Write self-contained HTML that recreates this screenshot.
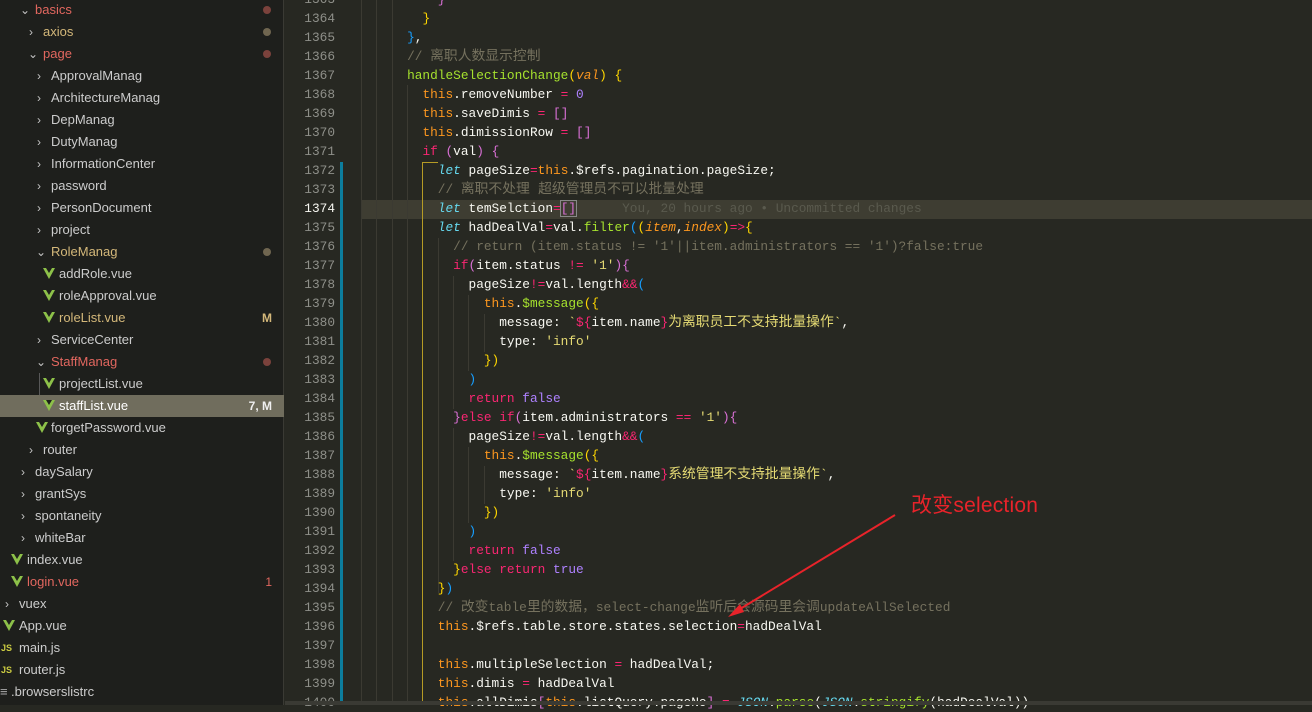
<!DOCTYPE html>
<html><head><meta charset="utf-8"><style>
*{margin:0;padding:0;box-sizing:border-box}
body{width:1312px;height:705px;overflow:hidden;background:#272822;position:relative;font-family:"Liberation Sans","Noto Sans CJK SC",sans-serif}
#side{position:absolute;left:0;top:0;width:284px;height:705px;background:#1e1f1c;border-right:1px solid #3a3a34}
.r{position:absolute;left:0;width:284px;height:22px;line-height:22px;font-size:13px;color:#cccccc;white-space:nowrap}
.r .tx{position:absolute}
.chev{position:absolute;top:0;font-size:12px;color:#c5c5c5}
.dot{position:absolute;left:263px;top:7px;width:8px;height:8px;border-radius:50%}
.badge{position:absolute;right:12px;top:0;font-weight:bold;font-size:12px}
.v{position:absolute;top:5px;width:0;height:0;border-left:6px solid transparent;border-right:6px solid transparent;border-top:11px solid #8dc149}
.v:after{content:"";position:absolute;left:-3px;top:-11px;border-left:3px solid transparent;border-right:3px solid transparent;border-top:5px solid #1e1f1c}
.js{position:absolute;left:1px;font-size:9px;font-weight:bold;color:#cbcb41}
.red{color:#e2675f}.yel{color:#d4b87a}
.ln{position:absolute;left:285px;width:50px;text-align:right;font-family:"Liberation Mono",monospace;font-size:12.8px;color:#8f908a;height:19px;line-height:19px}
#code{position:absolute;left:361px;top:-10px;font-family:"Liberation Mono","Noto Sans CJK SC",monospace;font-size:12.8px;line-height:19px;color:#f8f8f2;white-space:pre}
.z{font-size:13.8px;line-height:15px}
.k{color:#f92672}.t{color:#fd971f}.f{color:#a6e22e}.s{color:#e6db74}.c{color:#75715e}.n{color:#ae81ff}.l{color:#66d9ef;font-style:italic}.p{color:#fd971f;font-style:italic}.y{color:#ffd700}.m{color:#da70d6}.bl{color:#179fff}
.g{position:absolute;width:1px;background:#3b3a32}
</style></head><body>
<div id="side">
<div class="r" style="top:-1px"><span class="chev" style="left:20px">⌄</span><span class="tx red" style="left:35px">basics</span><span class="dot" style="background:#7b423c"></span></div>
<div class="r" style="top:21px"><span class="chev" style="left:29px">›</span><span class="tx yel" style="left:43px">axios</span><span class="dot" style="background:#706650"></span></div>
<div class="r" style="top:43px"><span class="chev" style="left:28px">⌄</span><span class="tx red" style="left:43px">page</span><span class="dot" style="background:#7b423c"></span></div>
<div class="r" style="top:65px"><span class="chev" style="left:37px">›</span><span class="tx" style="left:51px">ApprovalManag</span></div>
<div class="r" style="top:87px"><span class="chev" style="left:37px">›</span><span class="tx" style="left:51px">ArchitectureManag</span></div>
<div class="r" style="top:109px"><span class="chev" style="left:37px">›</span><span class="tx" style="left:51px">DepManag</span></div>
<div class="r" style="top:131px"><span class="chev" style="left:37px">›</span><span class="tx" style="left:51px">DutyManag</span></div>
<div class="r" style="top:153px"><span class="chev" style="left:37px">›</span><span class="tx" style="left:51px">InformationCenter</span></div>
<div class="r" style="top:175px"><span class="chev" style="left:37px">›</span><span class="tx" style="left:51px">password</span></div>
<div class="r" style="top:197px"><span class="chev" style="left:37px">›</span><span class="tx" style="left:51px">PersonDocument</span></div>
<div class="r" style="top:219px"><span class="chev" style="left:37px">›</span><span class="tx" style="left:51px">project</span></div>
<div class="r" style="top:241px"><span class="chev" style="left:36px">⌄</span><span class="tx yel" style="left:51px">RoleManag</span><span class="dot" style="background:#706650"></span></div>
<div class="r" style="top:263px"><span class="v" style="left:43px"></span><span class="tx" style="left:59px">addRole.vue</span></div>
<div class="r" style="top:285px"><span class="v" style="left:43px"></span><span class="tx" style="left:59px">roleApproval.vue</span></div>
<div class="r" style="top:307px"><span class="v" style="left:43px"></span><span class="tx yel" style="left:59px">roleList.vue</span><span class="badge yel">M</span></div>
<div class="r" style="top:329px"><span class="chev" style="left:37px">›</span><span class="tx" style="left:51px">ServiceCenter</span></div>
<div class="r" style="top:351px"><span class="chev" style="left:36px">⌄</span><span class="tx red" style="left:51px">StaffManag</span><span class="dot" style="background:#7b423c"></span></div>
<div style="position:absolute;left:39px;top:373px;width:1px;height:44px;background:#585858"></div>
<div class="r" style="top:373px"><span class="v" style="left:43px"></span><span class="tx" style="left:59px">projectList.vue</span></div>
<div class="r" style="top:395px;background:#706d5d;color:#fff"><span class="v" style="left:43px;border-top-color:#8dc149"></span><span class="tx" style="left:59px">staffList.vue</span><span class="badge" style="color:#f0f0f0">7, M</span></div>
<div class="r" style="top:417px"><span class="v" style="left:36px"></span><span class="tx" style="left:51px">forgetPassword.vue</span></div>
<div class="r" style="top:439px"><span class="chev" style="left:29px">›</span><span class="tx" style="left:43px">router</span></div>
<div class="r" style="top:461px"><span class="chev" style="left:21px">›</span><span class="tx" style="left:35px">daySalary</span></div>
<div class="r" style="top:483px"><span class="chev" style="left:21px">›</span><span class="tx" style="left:35px">grantSys</span></div>
<div class="r" style="top:505px"><span class="chev" style="left:21px">›</span><span class="tx" style="left:35px">spontaneity</span></div>
<div class="r" style="top:527px"><span class="chev" style="left:21px">›</span><span class="tx" style="left:35px">whiteBar</span></div>
<div class="r" style="top:549px"><span class="v" style="left:11px"></span><span class="tx" style="left:27px">index.vue</span></div>
<div class="r" style="top:571px"><span class="v" style="left:11px"></span><span class="tx red" style="left:27px">login.vue</span><span class="badge red" style="font-weight:normal">1</span></div>
<div class="r" style="top:593px"><span class="chev" style="left:5px">›</span><span class="tx" style="left:19px">vuex</span></div>
<div class="r" style="top:615px"><span class="v" style="left:3px"></span><span class="tx" style="left:19px">App.vue</span></div>
<div class="r" style="top:637px"><span class="js">JS</span><span class="tx" style="left:19px">main.js</span></div>
<div class="r" style="top:659px"><span class="js">JS</span><span class="tx" style="left:19px">router.js</span></div>
<div class="r" style="top:681px"><span class="tx" style="left:0px;color:#aaa">≡</span><span class="tx" style="left:11px">.browserslistrc</span></div>
</div>
<div style="position:absolute;left:361px;top:200px;width:951px;height:19px;background:#3e3d32"></div>
<div style="position:absolute;left:340px;top:162px;width:3px;height:540px;background:#0c7d9d"></div>
<div class="g" style="left:361px;top:0;height:705px"></div>
<div class="g" style="left:376px;top:0;height:705px"></div>
<div class="g" style="left:392px;top:0;height:705px"></div>
<div class="g" style="left:407px;top:85px;height:620px"></div>
<div style="position:absolute;left:422px;top:162px;width:1px;height:543px;background:#b59b25"></div>
<div style="position:absolute;left:422px;top:162px;width:16px;height:1px;background:#b59b25"></div>
<div class="g" style="left:438px;top:238px;height:355px"></div>
<div class="g" style="left:453px;top:276px;height:133px"></div>
<div class="g" style="left:453px;top:428px;height:133px"></div>
<div class="g" style="left:468px;top:295px;height:76px"></div>
<div class="g" style="left:468px;top:447px;height:76px"></div>
<div class="g" style="left:484px;top:314px;height:38px"></div>
<div class="g" style="left:484px;top:466px;height:38px"></div>
<div class="ln" style="top:-10px">1363</div><div class="ln" style="top:9px">1364</div><div class="ln" style="top:28px">1365</div><div class="ln" style="top:47px">1366</div><div class="ln" style="top:66px">1367</div><div class="ln" style="top:85px">1368</div><div class="ln" style="top:104px">1369</div><div class="ln" style="top:123px">1370</div><div class="ln" style="top:142px">1371</div><div class="ln" style="top:161px">1372</div><div class="ln" style="top:180px">1373</div><div class="ln" style="top:199px;color:#f8f8f2">1374</div><div class="ln" style="top:218px">1375</div><div class="ln" style="top:237px">1376</div><div class="ln" style="top:256px">1377</div><div class="ln" style="top:275px">1378</div><div class="ln" style="top:294px">1379</div><div class="ln" style="top:313px">1380</div><div class="ln" style="top:332px">1381</div><div class="ln" style="top:351px">1382</div><div class="ln" style="top:370px">1383</div><div class="ln" style="top:389px">1384</div><div class="ln" style="top:408px">1385</div><div class="ln" style="top:427px">1386</div><div class="ln" style="top:446px">1387</div><div class="ln" style="top:465px">1388</div><div class="ln" style="top:484px">1389</div><div class="ln" style="top:503px">1390</div><div class="ln" style="top:522px">1391</div><div class="ln" style="top:541px">1392</div><div class="ln" style="top:560px">1393</div><div class="ln" style="top:579px">1394</div><div class="ln" style="top:598px">1395</div><div class="ln" style="top:617px">1396</div><div class="ln" style="top:636px">1397</div><div class="ln" style="top:655px">1398</div><div class="ln" style="top:674px">1399</div><div class="ln" style="top:693px">1400</div>
<div id="code">          <span class="m">}</span>
        <span class="y">}</span>
      <span class="bl">}</span>,
      <span class="c">// <span class="z">离职人数显示控制</span></span>
      <span class="f">handleSelectionChange</span><span class="y">(</span><span class="p">val</span><span class="y">)</span> <span class="y">{</span>
        <span class="t">this</span>.removeNumber <span class="k">=</span> <span class="n">0</span>
        <span class="t">this</span>.saveDimis <span class="k">=</span> <span class="m">[]</span>
        <span class="t">this</span>.dimissionRow <span class="k">=</span> <span class="m">[]</span>
        <span class="k">if</span> <span class="m">(</span>val<span class="m">)</span> <span class="m">{</span>
          <span class="l">let</span> pageSize<span class="k">=</span><span class="t">this</span>.$refs.pagination.pageSize;
          <span class="c">// <span class="z">离职不处理 超级管理员不可以批量处理</span></span>
          <span class="l">let</span> temSelction<span class="k">=</span><span class="m" style="outline:1px solid #888">[]</span>      <span style="color:#5a5a4e">You, 20 hours ago • Uncommitted changes</span>
          <span class="l">let</span> hadDealVal<span class="k">=</span>val.<span class="f">filter</span><span class="bl">(</span><span class="y">(</span><span class="p">item</span>,<span class="p">index</span><span class="y">)</span><span class="k">=&gt;</span><span class="y">{</span>
            <span class="c">// return (item.status != '1'||item.administrators == '1')?false:true</span>
            <span class="k">if</span><span class="m">(</span>item.status <span class="k">!=</span> <span class="s">'1'</span><span class="m">)</span><span class="m">{</span>
              pageSize<span class="k">!=</span>val.length<span class="k">&amp;&amp;</span><span class="bl">(</span>
                <span class="t">this</span>.<span class="f">$message</span><span class="y">({</span>
                  message: <span class="s">`</span><span class="k">${</span>item.name<span class="k">}</span><span class="s z">为离职员工不支持批量操作</span><span class="s">`</span>,
                  type: <span class="s">'info'</span>
                <span class="y">})</span>
              <span class="bl">)</span>
              <span class="k">return</span> <span class="n">false</span>
            <span class="m">}</span><span class="k">else</span> <span class="k">if</span><span class="m">(</span>item.administrators <span class="k">==</span> <span class="s">'1'</span><span class="m">){</span>
              pageSize<span class="k">!=</span>val.length<span class="k">&amp;&amp;</span><span class="bl">(</span>
                <span class="t">this</span>.<span class="f">$message</span><span class="y">({</span>
                  message: <span class="s">`</span><span class="k">${</span>item.name<span class="k">}</span><span class="s z">系统管理不支持批量操作</span><span class="s">`</span>,
                  type: <span class="s">'info'</span>
                <span class="y">})</span>
              <span class="bl">)</span>
              <span class="k">return</span> <span class="n">false</span>
            <span class="y">}</span><span class="k">else</span> <span class="k">return</span> <span class="n">true</span>
          <span class="y">}</span><span class="bl">)</span>
          <span class="c">// <span class="z">改变</span>table<span class="z">里的数据，</span>select-change<span class="z">监听后会源码里会调</span>updateAllSelected</span>
          <span class="t">this</span>.$refs.table.store.states.selection<span class="k">=</span>hadDealVal

          <span class="t">this</span>.multipleSelection <span class="k">=</span> hadDealVal;
          <span class="t">this</span>.dimis <span class="k">=</span> hadDealVal
          <span class="t">this</span>.allDimis<span class="m">[</span><span class="t">this</span>.listQuery.pageNo<span class="m">]</span> <span class="k">=</span> <span class="l">JSON</span>.<span class="f">parse</span>(<span class="l">JSON</span>.<span class="f">stringify</span>(hadDealVal))</div>
<div style="position:absolute;left:285px;top:701px;width:1027px;height:4px;background:#3a3a34"></div>
<div style="position:absolute;left:911px;top:489px;font-size:21px;color:#e8232a;font-family:'Liberation Sans','Noto Sans CJK SC',sans-serif;letter-spacing:0.2px">改变selection</div>
<svg style="position:absolute;left:0;top:0" width="1312" height="705"><line x1="895" y1="515" x2="735" y2="612" stroke="#e8232a" stroke-width="2"/><polygon points="728,617 740,604 744,612" fill="#e8232a"/></svg>
</body></html>
